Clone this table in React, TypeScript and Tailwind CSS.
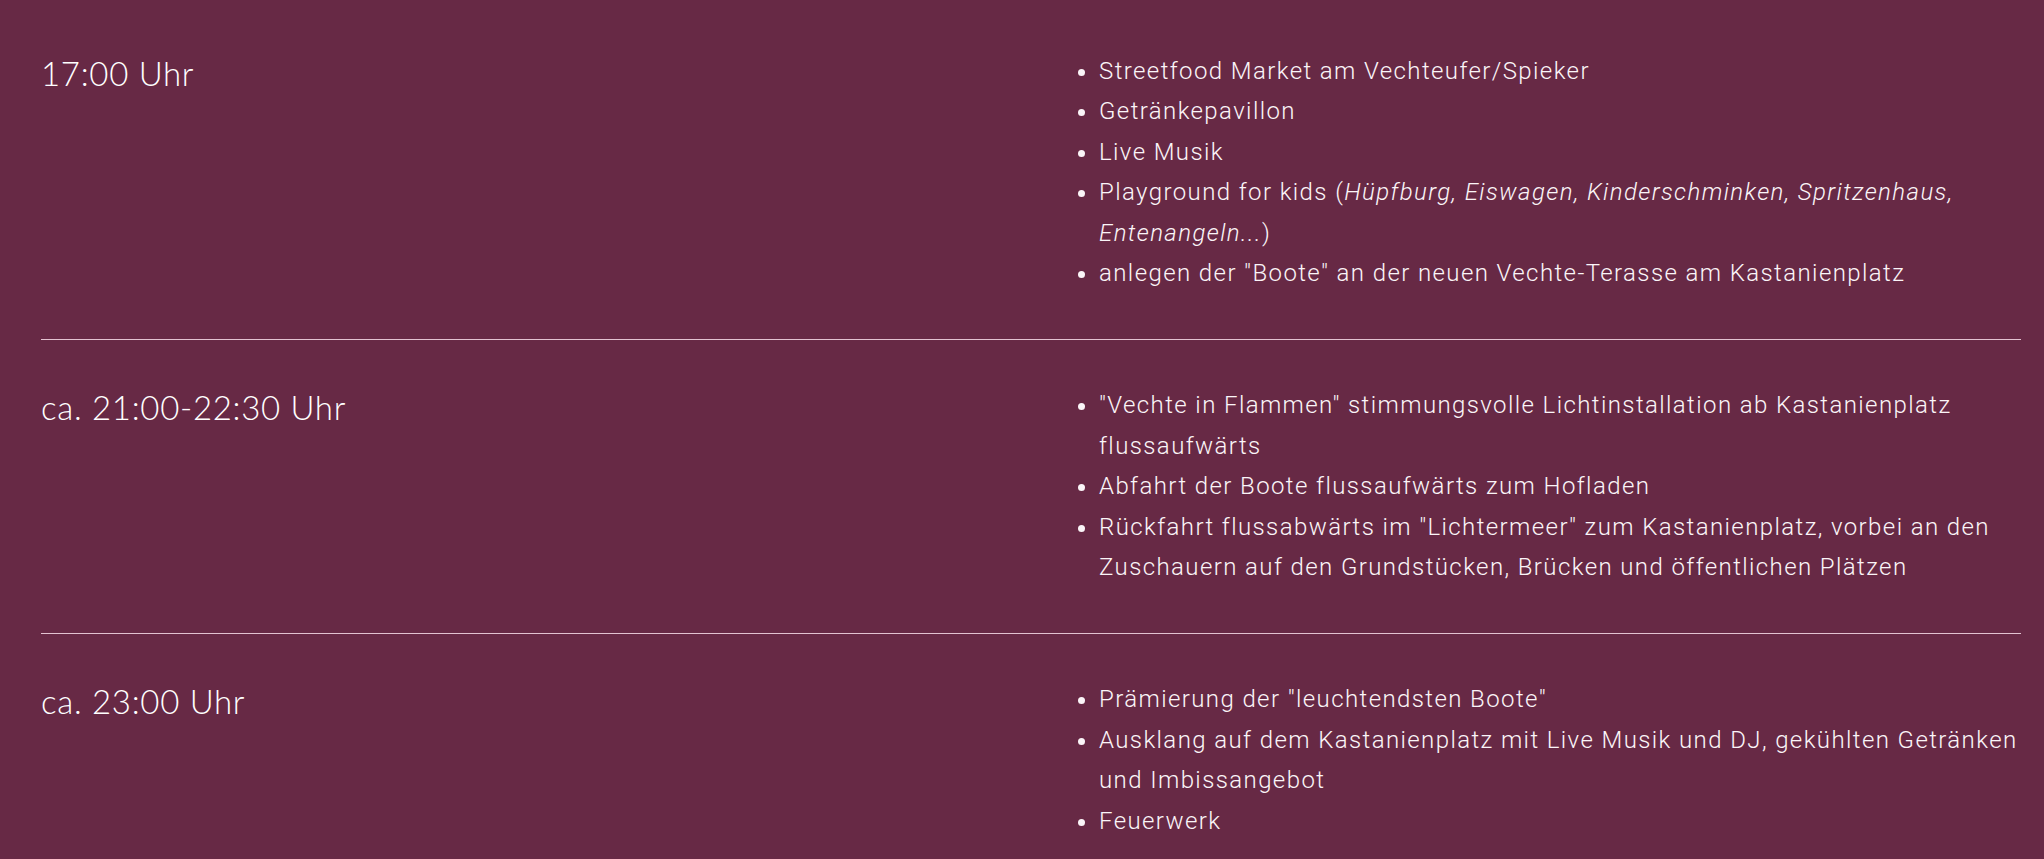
import React from 'react';

interface Slot {
  time: string;
  items: React.ReactNode[];
}

const slots: Slot[] = [
  {
    time: '17:00 Uhr',
    items: [
      'Streetfood Market am Vechteufer/Spieker',
      'Getränkepavillon',
      'Live Musik',
      <>
        Playground for kids (<em>Hüpfburg, Eiswagen, Kinderschminken, Spritzenhaus, Entenangeln...</em>)
      </>,
      'anlegen der "Boote" an der neuen Vechte-Terasse am Kastanienplatz',
    ],
  },
  {
    time: 'ca. 21:00-22:30 Uhr',
    items: [
      '"Vechte in Flammen" stimmungsvolle Lichtinstallation ab Kastanienplatz flussaufwärts',
      'Abfahrt der Boote flussaufwärts zum Hofladen',
      'Rückfahrt flussabwärts im "Lichtermeer" zum Kastanienplatz, vorbei an den Zuschauern auf den Grundstücken, Brücken und öffentlichen Plätzen',
    ],
  },
  {
    time: 'ca. 23:00 Uhr',
    items: [
      'Prämierung der "leuchtendsten Boote"',
      'Ausklang auf dem Kastanienplatz mit Live Musik und DJ, gekühlten Getränken und Imbissangebot',
      'Feuerwerk',
    ],
  },
];

const App: React.FC = () => {
  return (
    <div className="min-h-[859px] w-full bg-[#672945] pt-[6px] text-[#fbf5f8]">
      <div className="ml-[41px] w-[1980px]">
        {slots.map((slot, i) => (
          <div
            key={slot.time}
            className={`grid grid-cols-[1058px_1fr] pt-[45px] pb-[46px] ${i > 0 ? 'border-t border-[#e3c3d1]' : ''}`}
          >
            <h2 className="pt-[2px] font-['Lato',sans-serif] text-[33px] font-light leading-[40px] tracking-[0.7px] text-white">
              {slot.time}
            </h2>
            <ul className="list-disc font-['Roboto',sans-serif] text-[24px] font-light leading-[40.4px] tracking-[1.4px]">
              {slot.items.map((item, j) => (
                <li key={j}>{item}</li>
              ))}
            </ul>
          </div>
        ))}
      </div>
    </div>
  );
};

export default App;
